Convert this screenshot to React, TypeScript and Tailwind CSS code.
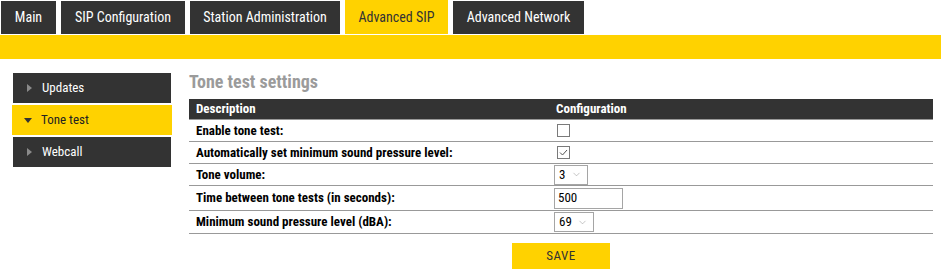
import { ChevronDown } from "lucide-react";

const tabs = [
  { label: "Main", w: "w-[55px]" },
  { label: "SIP Configuration", w: "w-[124px]" },
  { label: "Station Administration", w: "w-[150px]" },
  { label: "Advanced SIP", w: "w-[103px]", active: true },
  { label: "Advanced Network", w: "w-[131px]" },
];

const menu = [
  { label: "Updates" },
  { label: "Tone test", active: true },
  { label: "Webcall" },
];

function Checkbox({ checked }: { checked?: boolean }) {
  return (
    <span className="flex items-center justify-center w-[13px] h-[13px] border border-[#7a7a7a] bg-white">
      {checked && (
        <svg width="11" height="11" viewBox="0 0 11 11">
          <path d="M2 5.5 L4.5 8 L9 3" fill="none" stroke="#555" strokeWidth="1" />
        </svg>
      )}
    </span>
  );
}

function Select({ value, w }: { value: string; w: string }) {
  return (
    <span className={`flex items-center justify-between h-[20px] ${w} border border-[#a5a5a5] bg-white pl-[4px] pr-[5px] text-[13px] text-black`}>
      {value}
      <ChevronDown size={11} strokeWidth={1.25} className="text-[#9a9a9a]" />
    </span>
  );
}

export default function App() {
  return (
    <div className="w-[941px] h-[273px] bg-white font-['Roboto_Condensed','Roboto',sans-serif] font-stretch-condensed overflow-hidden">
      <div className="flex gap-[5px] pl-[1px] h-[34px] items-end">
        {tabs.map((t) => (
          <div
            key={t.label}
            className={`${t.w} flex items-center justify-center text-[14px] ${
              t.active ? "h-[34px] bg-[#ffd200] text-[#333]" : "h-[33px] bg-[#333333] text-white"
            }`}
          >
            {t.label}
          </div>
        ))}
      </div>
      <div className="mt-px h-[24px] bg-[#ffd200]" />

      <div className="flex mt-[12px] pl-[12px] pr-[8px]">
        <div className="w-[160px] mt-[2px] flex flex-col gap-[2px]">
          {menu.map((m) => (
            <div
              key={m.label}
              className={`h-[30px] flex items-center text-[13px] ${
                m.active ? "bg-[#ffd200] text-[#222] pl-[12px]" : "bg-[#333333] text-white mx-px pl-[14px]"
              }`}
            >
              {m.active ? (
                <span className="w-0 h-0 border-l-[4px] border-r-[4px] border-t-[5px] border-l-transparent border-r-transparent border-t-[#333] mr-[9px]" />
              ) : (
                <span className="w-0 h-0 border-t-[4px] border-b-[4px] border-l-[5px] border-t-transparent border-b-transparent border-l-[#8a8a8a] mr-[10px]" />
              )}
              {m.label}
            </div>
          ))}
        </div>

        <div className="flex-1 ml-[17px]">
          <h1 className="text-[18px] leading-[22px] font-bold text-[#9b9b9b] mb-[6px]">Tone test settings</h1>
          <div className="text-[13px]">
            <div className="flex h-[21px] items-center bg-[#333333] border-b border-[#999] text-white font-bold">
              <div className="w-[361px] pl-[7px]">Description</div>
              <div className="pl-[6px]">Configuration</div>
            </div>
            <div className="flex h-[22px] items-center border-b border-[#999] font-bold text-black">
              <div className="w-[361px] pl-[7px]">Enable tone test:</div>
              <div className="pl-[7px]">
                <Checkbox />
              </div>
            </div>
            <div className="flex h-[22px] items-center border-b border-[#999] font-bold text-black">
              <div className="w-[361px] pl-[7px]">Automatically set minimum sound pressure level:</div>
              <div className="pl-[7px]">
                <Checkbox checked />
              </div>
            </div>
            <div className="flex h-[22px] items-center border-b border-[#999] font-bold text-black">
              <div className="w-[361px] pl-[7px]">Tone volume:</div>
              <div className="pl-[4px] font-normal">
                <Select value="3" w="w-[34px]" />
              </div>
            </div>
            <div className="flex h-[25px] items-center border-b border-[#999] font-bold text-black">
              <div className="w-[361px] pl-[7px]">Time between tone tests (in seconds):</div>
              <div className="pl-[4px] font-normal">
                <span className="flex items-center h-[21px] w-[69px] border border-[#a5a5a5] bg-white pl-[3px]">500</span>
              </div>
            </div>
            <div className="flex h-[23px] items-center border-b border-[#999] font-bold text-black">
              <div className="w-[361px] pl-[7px]">Minimum sound pressure level (dBA):</div>
              <div className="pl-[4px] font-normal">
                <Select value="69" w="w-[40px]" />
              </div>
            </div>
          </div>
          <div className="flex justify-center mt-[9px]">
            <button className="w-[98px] h-[26px] bg-[#ffd200] text-[13px] text-[#333] tracking-[0.5px]">SAVE</button>
          </div>
        </div>
      </div>
    </div>
  );
}
